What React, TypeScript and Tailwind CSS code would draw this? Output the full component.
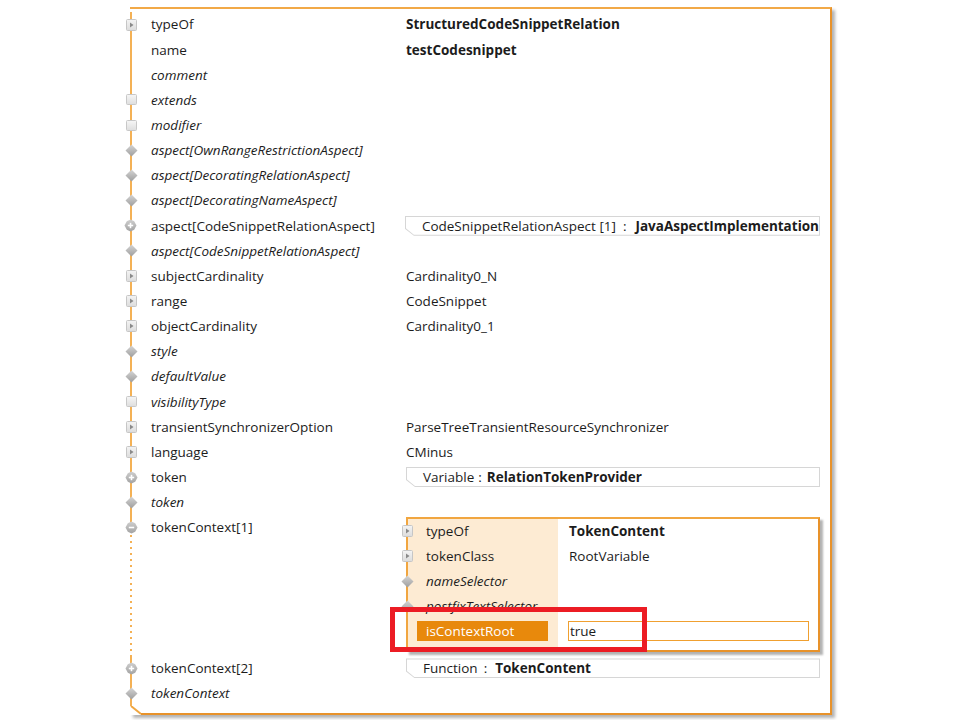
import type { ReactNode } from "react";

type IconKind = "expand" | "square" | "diamond" | "plus" | "minus" | "none";

type Entry = {
  icon: IconKind;
  label: string;
  italic?: boolean;
  value?: string;
  bold?: boolean;
  box?: [string, string, string];
};

const entries: Entry[] = [
  { icon: "expand", label: "typeOf", value: "StructuredCodeSnippetRelation", bold: true },
  { icon: "none", label: "name", value: "testCodesnippet", bold: true },
  { icon: "none", label: "comment", italic: true },
  { icon: "square", label: "extends", italic: true },
  { icon: "square", label: "modifier", italic: true },
  { icon: "diamond", label: "aspect[OwnRangeRestrictionAspect]", italic: true },
  { icon: "diamond", label: "aspect[DecoratingRelationAspect]", italic: true },
  { icon: "diamond", label: "aspect[DecoratingNameAspect]", italic: true },
  {
    icon: "plus",
    label: "aspect[CodeSnippetRelationAspect]",
    box: ["CodeSnippetRelationAspect [1]", "JavaAspectImplementation", "ml-[7px] mr-[9px]"],
  },
  { icon: "diamond", label: "aspect[CodeSnippetRelationAspect]", italic: true },
  { icon: "expand", label: "subjectCardinality", value: "Cardinality0_N" },
  { icon: "expand", label: "range", value: "CodeSnippet" },
  { icon: "expand", label: "objectCardinality", value: "Cardinality0_1" },
  { icon: "diamond", label: "style", italic: true },
  { icon: "diamond", label: "defaultValue", italic: true },
  { icon: "square", label: "visibilityType", italic: true },
  { icon: "expand", label: "transientSynchronizerOption", value: "ParseTreeTransientResourceSynchronizer" },
  { icon: "expand", label: "language", value: "CMinus" },
  { icon: "plus", label: "token", box: ["Variable", "RelationTokenProvider", "ml-[4px] mr-[5px]"] },
  { icon: "diamond", label: "token", italic: true },
];

const tail: Entry[] = [
  { icon: "plus", label: "tokenContext[2]", box: ["Function", "TokenContent", "ml-[6px] mr-[8px]"] },
  { icon: "diamond", label: "tokenContext", italic: true },
];

function RowIcon({ kind }: { kind: IconKind }) {
  if (kind === "none") return null;
  if (kind === "expand")
    return (
      <svg width="11" height="12" viewBox="0 0 11 12">
        <defs>
          <linearGradient id="gx" x1="0" y1="0" x2="0" y2="1">
            <stop offset="0" stopColor="#f4f4f4" />
            <stop offset="1" stopColor="#dcdcdc" />
          </linearGradient>
        </defs>
        <rect x="0.5" y="0.5" width="10" height="11" rx="1" fill="url(#gx)" stroke="#c6c6c6" />
        <path d="M4 3.5 L7.5 6 L4 8.5 Z" fill="#8a8a8a" />
      </svg>
    );
  if (kind === "square")
    return (
      <svg width="11" height="11" viewBox="0 0 11 11">
        <defs>
          <linearGradient id="gs" x1="0" y1="0" x2="0" y2="1">
            <stop offset="0" stopColor="#f6f6f6" />
            <stop offset="1" stopColor="#dedede" />
          </linearGradient>
        </defs>
        <rect x="0.5" y="0.5" width="10" height="10" rx="1" fill="url(#gs)" stroke="#c8c8c8" />
      </svg>
    );
  if (kind === "diamond")
    return (
      <svg width="13" height="13" viewBox="0 0 13 13">
        <defs>
          <linearGradient id="gd" x1="0" y1="0" x2="0" y2="1">
            <stop offset="0" stopColor="#d4d4d4" />
            <stop offset="1" stopColor="#9e9e9e" />
          </linearGradient>
        </defs>
        <path d="M6.5 0.5 L12.5 6.5 L6.5 12.5 L0.5 6.5 Z" fill="url(#gd)" />
      </svg>
    );
  return (
    <svg width="13" height="13" viewBox="0 0 13 13">
      <defs>
        <linearGradient id="gp" x1="0" y1="0" x2="0" y2="1">
          <stop offset="0" stopColor="#cfcfcf" />
          <stop offset="1" stopColor="#a2a2a2" />
        </linearGradient>
      </defs>
      <path d="M6.5 0.5 L10.2 2.2 L12.5 6.5 L10.2 10.8 L6.5 12.5 L2.8 10.8 L0.5 6.5 L2.8 2.2 Z" fill="url(#gp)" />
      <path d="M3.8 6.5 H9.2" stroke="#ffffff" strokeWidth="1.6" />
      {kind === "plus" && <path d="M6.5 3.8 V9.2" stroke="#ffffff" strokeWidth="1.6" />}
    </svg>
  );
}

function ValueBox({ kind, name, gap }: { kind: string; name: string; gap: string }) {
  return (
    <div className="h-[20px] bg-[#d6d6d6] p-[1px] [clip-path:polygon(0_0,100%_0,100%_100%,9px_100%,0_13px)]">
      <div className="flex h-full items-center whitespace-pre bg-white pl-[16px] [clip-path:polygon(0_0,100%_0,100%_100%,8px_100%,0_11.5px)]">
        <span>{kind}</span>
        <span className={gap}>:</span>
        <span className="font-bold">{name}</span>
      </div>
    </div>
  );
}

function Row({ entry }: { entry: Entry }) {
  return (
    <div className="flex h-[25.15px] items-center">
      <div className="w-[2px] self-stretch bg-[#f4b155]" />
      <div className="-ml-[8px] flex w-[14px] justify-center">
        <RowIcon kind={entry.icon} />
      </div>
      <div className={`w-[268px] pl-[13px] ${entry.italic ? "italic" : ""}`}>{entry.label}</div>
      <div className="flex-1 pr-[10px]">
        {entry.box ? (
          <ValueBox kind={entry.box[0]} name={entry.box[1]} gap={entry.box[2]} />
        ) : (
          <span className={entry.bold ? "font-bold" : ""}>{entry.value}</span>
        )}
      </div>
    </div>
  );
}

function NestedLabel({ icon, children, italic }: { icon: IconKind; children: ReactNode; italic?: boolean }) {
  return (
    <div className="flex h-[25px] items-center">
      <div className="-ml-[8px] flex w-[14px] justify-center">
        <RowIcon kind={icon} />
      </div>
      <div className={`ml-[3px] pl-[9px] ${italic ? "italic" : ""}`}>{children}</div>
    </div>
  );
}

function TokenContext() {
  return (
    <div className="flex h-[135px] border-2 border-[#f1a640] border-r-[#e8922a] border-b-[#e8922a] shadow-[3px_3px_2px_rgba(0,0,0,0.3)]">
      <div className="w-[150px] bg-[#fdebd3]">
        <NestedLabel icon="expand">typeOf</NestedLabel>
        <NestedLabel icon="expand">tokenClass</NestedLabel>
        <NestedLabel icon="diamond" italic>
          nameSelector
        </NestedLabel>
        <NestedLabel icon="diamond" italic>
          postfixTextSelector
        </NestedLabel>
        <div className="flex h-[25px] items-center">
          <div className="ml-[9px] flex h-[20px] w-[131px] items-center bg-[#e8890c] pl-[9px] text-white">
            isContextRoot
          </div>
        </div>
      </div>
      <div className="flex-1 bg-white">
        <div className="flex h-[25px] items-center pl-[11px] font-bold">TokenContent</div>
        <div className="flex h-[25px] items-center pl-[11px]">RootVariable</div>
        <div className="h-[25px]" />
        <div className="h-[25px]" />
        <div className="flex h-[25px] items-center pl-[10px]">
          <div className="flex h-[20px] w-[241px] items-center border border-[#f0a030] pl-[1px]">true</div>
        </div>
      </div>
    </div>
  );
}

export default function App() {
  return (
    <div className="relative h-[720px] w-[960px] overflow-hidden bg-white font-['Open_Sans',sans-serif] text-[13.5px] text-[#1c1c1c]">
      <div className="ml-[130px] mt-[7px] w-[702px] border-t-2 border-r-2 border-t-[#f2a947] border-r-[#e8922a] shadow-[3px_3px_3px_rgba(0,0,0,0.3)]">
        <div className="pt-[3px]">
          {entries.map((e, i) => (
            <Row key={i} entry={e} />
          ))}

          {/* expanded tokenContext[1] */}
          <div className="flex">
            <div className="flex w-[2px] flex-col">
              <div className="h-[14px] bg-[#f4b155]" />
              <div className="flex-1 bg-[repeating-linear-gradient(to_bottom,#f4b155_0_2px,transparent_2px_6px)]" />
            </div>
            <div className="-ml-[8px] flex h-[25px] w-[14px] items-center justify-center">
              <RowIcon kind="minus" />
            </div>
            <div className="flex h-[25px] w-[268px] items-center pl-[13px]">tokenContext[1]</div>
            <div className="flex-1 pb-[4px] pr-[10px] pt-[2px]">
              <TokenContext />
            </div>
          </div>

          {tail.map((e, i) => (
            <Row key={i} entry={e} />
          ))}
        </div>
        <div className="flex h-[9px]">
          <svg width="11" height="9" viewBox="0 0 11 9" className="shrink-0">
            <path d="M1 0 L11 8" stroke="#f0a640" strokeWidth="2" fill="none" />
          </svg>
          <div className="flex-1 border-b-2 border-[#e8922a]" />
        </div>
      </div>

      {/* annotation */}
      <div className="absolute left-[390px] top-[607px] h-[45px] w-[257px] border-[5px] border-[#ec1c24]" />
    </div>
  );
}
